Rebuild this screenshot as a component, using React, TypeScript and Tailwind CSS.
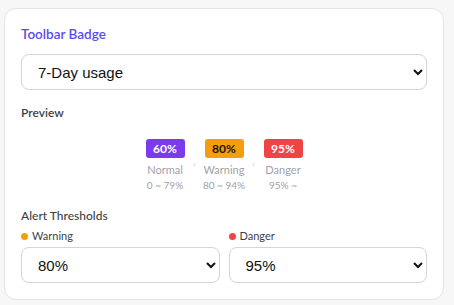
import { useState } from "react";

const levels = [
  { value: "60%", label: "Normal", range: "0 ~ 79%", badge: "bg-[#7c3aed] text-white" },
  { value: "80%", label: "Warning", range: "80 ~ 94%", badge: "bg-[#f59e0b] text-[#1f1300]" },
  { value: "95%", label: "Danger", range: "95% ~", badge: "bg-[#ef4444] text-white" },
];

const App = () => {
  const [metric, setMetric] = useState("7day");
  const [warning, setWarning] = useState("80");
  const [danger, setDanger] = useState("95");

  return (
    <div className="min-h-screen bg-[#f7f7f8] pt-2 pl-1 font-['Lato',sans-serif]">
      <div className="w-[440px] bg-white border border-[#e4e4e7] rounded-xl px-4 pt-4 pb-4">
        {/* Title */}
        <h2 className="text-[13.5px] leading-[18px] font-semibold text-[#5b4cf0]">
          Toolbar Badge
        </h2>

        <select
          value={metric}
          onChange={(e) => setMetric(e.target.value)}
          className="mt-[11px] w-full h-9 px-3 border border-[#d4d4d8] rounded-lg bg-white text-[15px] text-[#111] font-['Liberation_Sans',Arial,sans-serif]"
        >
          <option value="7day">7-Day usage</option>
          <option value="30day">30-Day usage</option>
          <option value="today">Today</option>
        </select>

        {/* Preview */}
        <p className="mt-[15px] text-[12px] leading-4 font-semibold text-[#3f3f46]">Preview</p>
        <div className="mt-[18px] flex justify-center">
          {levels.map((lv, i) => (
            <div key={lv.label} className="flex">
              {i > 0 && (
                <span className="w-[13px] text-center text-[10px] leading-none text-[#d4d4d8] mt-[19px]">
                  ›
                </span>
              )}
              <div className="w-[46px] flex flex-col items-center">
                <span
                  className={`w-[39px] h-[19px] rounded-[3px] flex items-center justify-center text-[12px] font-bold ${lv.badge}`}
                >
                  {lv.value}
                </span>
                <span className="mt-[5px] text-[11px] leading-[14px] text-[#a1a1aa]">{lv.label}</span>
                <span className="mt-px text-[10px] leading-[14px] text-[#a1a1aa]">{lv.range}</span>
              </div>
            </div>
          ))}
        </div>

        {/* Thresholds */}
        <p className="mt-4 text-[12px] leading-4 font-medium text-[#3f3f46]">Alert Thresholds</p>
        <div className="mt-[5px] grid grid-cols-2 gap-[9px]">
          <div>
            <div className="flex items-center gap-1 text-[11px] leading-[14px] text-[#3f3f46]">
              <span className="w-[7px] h-[7px] rounded-full bg-[#f59e0b]" />
              Warning
            </div>
            <select
              value={warning}
              onChange={(e) => setWarning(e.target.value)}
              className="mt-1 w-full h-9 px-3 border border-[#d4d4d8] rounded-lg bg-white text-[15px] text-[#111] font-['Liberation_Sans',Arial,sans-serif]"
            >
              <option value="70">70%</option>
              <option value="80">80%</option>
              <option value="90">90%</option>
            </select>
          </div>
          <div>
            <div className="flex items-center gap-1 text-[11px] leading-[14px] text-[#3f3f46]">
              <span className="w-[7px] h-[7px] rounded-full bg-[#ef4444]" />
              Danger
            </div>
            <select
              value={danger}
              onChange={(e) => setDanger(e.target.value)}
              className="mt-1 w-full h-9 px-3 border border-[#d4d4d8] rounded-lg bg-white text-[15px] text-[#111] font-['Liberation_Sans',Arial,sans-serif]"
            >
              <option value="90">90%</option>
              <option value="95">95%</option>
              <option value="99">99%</option>
            </select>
          </div>
        </div>
      </div>
    </div>
  );
};

export default App;
